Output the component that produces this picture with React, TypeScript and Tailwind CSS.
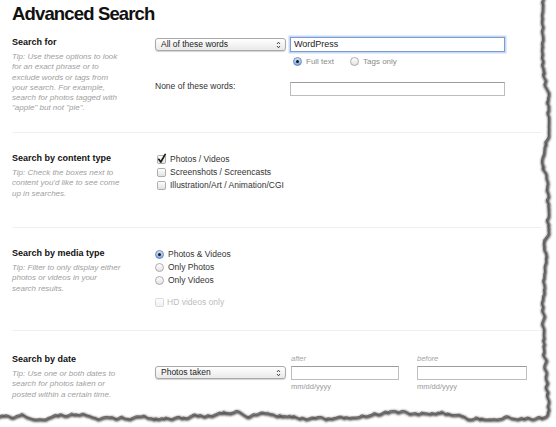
import type { ReactNode } from "react";

const tips = {
  text: [
    "Tip: Use these options to look",
    "for an exact phrase or to",
    "exclude words or tags from",
    "your search. For example,",
    "search for photos tagged with",
    "\"apple\" but not \"pie\".",
  ],
  content: ["Tip: Check the boxes next to", "content you'd like to see come", "up in searches."],
  media: ["Tip: Filter to only display either", "photos or videos in your", "search results."],
  date: ["Tip: Use one or both dates to", "search for photos taken or", "posted within a certain time."],
};

function rng(seed: number) {
  let s = seed;
  return () => {
    s = (s * 16807) % 2147483647;
    return (s - 1) / 2147483646;
  };
}

function tornEdge() {
  const r = rng(11);
  const pts: [number, number][] = [];
  let x = 545;
  for (let y = -4; y <= 414; y += 2) {
    x += (r() - 0.5) * 3.2;
    x = Math.max(541.5, Math.min(548.5, x));
    pts.push([x, y]);
  }
  let y = 417;
  for (let xx = x - 2; xx >= -6; xx -= 2) {
    y += (r() - 0.5) * 3.2;
    y = Math.max(410.5, Math.min(419, y));
    pts.push([xx, y]);
  }
  return pts;
}

function TornOverlay() {
  const pts = tornEdge();
  const line = pts.map((p, i) => `${i ? "L" : "M"}${p[0].toFixed(1)} ${p[1].toFixed(1)}`).join(" ");
  const outside = `M-10 -10 H566 V437 H-10 Z ${line} L-10 -10 Z`;
  return (
    <svg className="pointer-events-none absolute inset-0" width="556" height="427" viewBox="0 0 556 427">
      <defs>
        <filter id="blur" x="-5%" y="-5%" width="110%" height="110%">
          <feGaussianBlur stdDeviation="1" />
        </filter>
      </defs>
      <path d={outside} fill="#fff" fillRule="evenodd" />
      <path d={line} fill="none" stroke="#3a3a3a" strokeWidth="2.8" filter="url(#blur)" transform="translate(0.8 1.3)" />
      <path d={line} fill="none" stroke="#555" strokeWidth="0.8" />
    </svg>
  );
}

function Radio({ on, id, dim }: { on?: boolean; id: string; dim?: boolean }) {
  return (
    <svg width="9" height="9" viewBox="0 0 9 9" className="shrink-0">
      <defs>
        <linearGradient id={id} x1="0" y1="0" x2="0" y2="1">
          <stop offset="0" stopColor={on ? "#d5e4f8" : "#ffffff"} />
          <stop offset="1" stopColor={on ? "#7ea6dc" : "#e2e2e2"} />
        </linearGradient>
      </defs>
      <circle cx="4.5" cy="4.5" r="4" fill={`url(#${id})`} stroke={on ? "#5b7fb5" : dim ? "#c4c4c4" : "#9a9a9a"} strokeWidth="0.8" />
      {on && <circle cx="4.5" cy="4.5" r="1.5" fill="#1b1b1b" />}
    </svg>
  );
}

function Check({ on, id, dim }: { on?: boolean; id: string; dim?: boolean }) {
  return (
    <svg width="9" height="9" viewBox="0 0 9 9" className="shrink-0 overflow-visible">
      <defs>
        <linearGradient id={id} x1="0" y1="0" x2="0" y2="1">
          <stop offset="0" stopColor="#ffffff" />
          <stop offset="1" stopColor={dim ? "#f0f0f0" : "#e0e0e0"} />
        </linearGradient>
      </defs>
      <rect x="0.5" y="0.5" width="8" height="8" rx="1.2" fill={`url(#${id})`} stroke={dim ? "#d0d0d0" : "#9a9a9a"} strokeWidth="0.8" />
      {on && <path d="M1.8 4.3 L3.8 7 L8.2 -0.6" fill="none" stroke="#1a1a1a" strokeWidth="1.7" strokeLinecap="round" strokeLinejoin="round" />}
    </svg>
  );
}

function Select({ label }: { label: string }) {
  return (
    <div className="flex h-[13px] w-[131px] items-center justify-between rounded-[3px] border border-[#a8a8a8] bg-gradient-to-b from-white to-[#e9e9e9] pl-[5px] pr-[4px] text-[8.5px] leading-[11px] text-[#222] shadow-[0_1px_1px_rgba(0,0,0,0.18)]">
      <span>{label}</span>
      <svg width="5" height="8" viewBox="0 0 5 8">
        <path d="M1 3 L2.5 1.2 L4 3 M1 5 L2.5 6.8 L4 5" fill="none" stroke="#333" strokeWidth="0.9" />
      </svg>
    </div>
  );
}

function Tip({ lines, mt }: { lines: string[]; mt: string }) {
  return (
    <div className={`${mt} text-[8px] italic leading-[10.3px] text-[#a0a0a0]`}>
      {lines.map((l) => (
        <div key={l} className="whitespace-nowrap">{l}</div>
      ))}
    </div>
  );
}

function Section({ title, tip, h, pt, last, children }: { title: string; tip: string[]; h: string; pt: string; last?: boolean; children: ReactNode }) {
  return (
    <div className={`flex ${h} ${pt} ${last ? "" : "border-b border-[#f0f0f0]"}`}>
      <div className="w-[143px] shrink-0">
        <div className="h-[11px] text-[9px] font-bold leading-[11px] text-[#111]">{title}</div>
        <Tip lines={tip} mt="mt-[4px]" />
      </div>
      <div className="flex-1">{children}</div>
    </div>
  );
}

export default function App() {
  return (
    <div className="relative h-[427px] w-[556px] overflow-hidden bg-white font-['Liberation_Sans',Arial,sans-serif] text-[#333]">
      <div className="pl-[12px] pr-[14px]">
        <h1 className="h-[37px] pt-[3px] text-[18.5px] font-bold leading-[21px] tracking-[-0.85px] text-[#111]">Advanced Search</h1>

        <Section title="Search for" tip={tips.text} h="h-[96px]" pt="pt-0">
          <div className="flex items-start">
            <div className="mt-[1px]">
              <Select label="All of these words" />
            </div>
            <div className="ml-[4px] flex h-[15px] w-[215px] items-center border border-[#7d9bd3] bg-white pl-[3px] text-[9px] text-[#222] shadow-[0_0_0_1.5px_#c8daf3]">
              WordPress
            </div>
          </div>
          <div className="mt-[5px] flex h-[9px] items-center pl-[138px] text-[8px] text-[#8a8a8a]">
            <Radio on id="r1" />
            <span className="ml-[4px]">Full text</span>
            <span className="ml-[16px]"><Radio id="r2" /></span>
            <span className="ml-[4px]">Tags only</span>
          </div>
          <div className="mt-[16px] flex items-start">
            <div className="w-[135px] text-[8.5px] leading-[9px]">None of these words:</div>
            <div className="h-[14px] w-[215px] border border-[#bdbdbd] border-t-[#9c9c9c] bg-white" />
          </div>
        </Section>

        <Section title="Search by content type" tip={tips.content} h="h-[95px]" pt="pt-[20px]">
          <div className="flex flex-col pl-[2px] text-[8.5px]">
            {[
              ["Photos / Videos", true],
              ["Screenshots / Screencasts", false],
              ["Illustration/Art / Animation/CGI", false],
            ].map(([l, on], i) => (
              <div key={l as string} className="flex h-[13px] items-center gap-[4px]">
                <Check on={on as boolean} id={`c${i}`} />
                <span>{l as string}</span>
              </div>
            ))}
          </div>
        </Section>

        <Section title="Search by media type" tip={tips.media} h="h-[103px]" pt="pt-[20px]">
          <div className="flex flex-col text-[8.5px]">
            {["Photos & Videos", "Only Photos", "Only Videos"].map((l, i) => (
              <div key={l} className="flex h-[13px] items-center gap-[4px]">
                <Radio on={i === 0} id={`m${i}`} />
                <span>{l}</span>
              </div>
            ))}
            <div className="mt-[9px] flex h-[13px] items-center gap-[3px] text-[#bdbdbd]">
              <Check dim id="hd" />
              <span>HD videos only</span>
            </div>
          </div>
        </Section>

        <Section title="Search by date" tip={tips.date} h="h-[80px]" pt="pt-[23px]" last>
          <div className="flex items-start">
            <div className="mt-[12px]">
              <Select label="Photos taken" />
            </div>
            <div className="ml-[5px] w-[108px]">
              <div className="h-[12px] text-[7.5px] italic leading-[10px] text-[#a5a5a5]">after</div>
              <div className="h-[14px] border border-[#bdbdbd] border-t-[#9c9c9c] bg-white" />
              <div className="mt-[2px] text-[7.5px] leading-[10px] text-[#9a9a9a]">mm/dd/yyyy</div>
            </div>
            <div className="ml-[18px] w-[110px]">
              <div className="h-[12px] text-[7.5px] italic leading-[10px] text-[#a5a5a5]">before</div>
              <div className="h-[14px] border border-[#bdbdbd] border-t-[#9c9c9c] bg-white" />
              <div className="mt-[2px] text-[7.5px] leading-[10px] text-[#9a9a9a]">mm/dd/yyyy</div>
            </div>
          </div>
        </Section>
      </div>
      <TornOverlay />
    </div>
  );
}
